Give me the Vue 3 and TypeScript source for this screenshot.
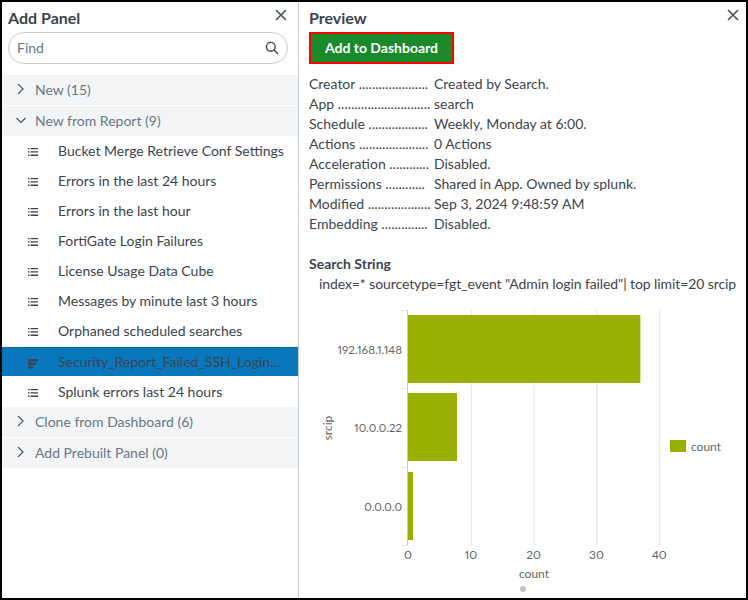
<script setup lang="ts">
interface Section {
  label: string
  open: boolean
}

const reports = [
  'Bucket Merge Retrieve Conf Settings',
  'Errors in the last 24 hours',
  'Errors in the last hour',
  'FortiGate Login Failures',
  'License Usage Data Cube',
  'Messages by minute last 3 hours',
  'Orphaned scheduled searches',
  'Security_Report_Failed_SSH_Login_Attempts',
  'Splunk errors last 24 hours'
]
const selectedReport = 'Security_Report_Failed_SSH_Login_Attempts'

const topSections: Section[] = [
  { label: 'New (15)', open: false },
  { label: 'New from Report (9)', open: true }
]
const bottomSections: Section[] = [
  { label: 'Clone from Dashboard (6)', open: false },
  { label: 'Add Prebuilt Panel (0)', open: false }
]

const details = [
  { key: 'Creator', dots: 21, value: 'Created by Search.' },
  { key: 'App', dots: 28, value: 'search' },
  { key: 'Schedule', dots: 18, value: 'Weekly, Monday at 6:00.' },
  { key: 'Actions', dots: 21, value: '0 Actions' },
  { key: 'Acceleration', dots: 12, value: 'Disabled.' },
  { key: 'Permissions', dots: 12, value: 'Shared in App. Owned by splunk.' },
  { key: 'Modified', dots: 19, value: 'Sep 3, 2024 9:48:59 AM' },
  { key: 'Embedding', dots: 14, value: 'Disabled.' }
]

// chart geometry, relative to the svg box
const originX = 109
const pxPerCount = 6.28
const xTicks = [0, 10, 20, 30, 40]
const bars = [
  { label: '192.168.1.148', count: 37, y: 7 },
  { label: '10.0.0.22', count: 7.8, y: 85 },
  { label: '0.0.0.0', count: 0.8, y: 164 }
]
const yTicks = [2, 80, 159, 237]
</script>

<template>
  <div class="frame">
    <aside class="side">
      <button class="close" aria-label="Close">
        <svg width="12" height="12" viewBox="0 0 12 12"><path d="M1 1l10 10M11 1L1 11" /></svg>
      </button>
      <h2 class="title">Add Panel</h2>
      <div class="search">
        <span class="find">Find</span>
        <svg class="lens" width="14" height="14" viewBox="0 0 14 14">
          <circle cx="5.8" cy="5.8" r="4.4" />
          <path d="M9 9l4 4" />
        </svg>
      </div>

      <div class="tree">
        <div v-for="s in topSections" :key="s.label" class="band">
          <svg class="chev" width="10" height="10" viewBox="0 0 10 10">
            <path :d="s.open ? 'M0.5 3l4.500 4.500 4.500-4.500' : 'M2 0l5 5-5 5'" />
          </svg>
          <span>{{ s.label }}</span>
        </div>
        <ul class="reports">
          <li v-for="r in reports" :key="r" class="report" :class="{ selected: r === selectedReport }">
            <svg v-if="r === selectedReport" class="ico" width="10" height="10" viewBox="0 0 10 10">
              <path class="solid" d="M0 0h10v2.500H0zM0 3.500h8v2.500H0zM0 7h5v2.500H0z" />
            </svg>
            <svg v-else class="ico" width="10" height="8" viewBox="0 0 10 8">
              <path class="solid" d="M0 0h1.500v1.300H0zM2.500 0H10v1.300H2.500zM0 3.300h1.500v1.300H0zM2.500 3.300H10v1.300H2.500zM0 6.600h1.500v1.300H0zM2.500 6.600H10v1.300H2.500z" />
            </svg>
            <span class="report-name">{{ r }}</span>
          </li>
        </ul>
        <div v-for="s in bottomSections" :key="s.label" class="band">
          <svg class="chev" width="10" height="10" viewBox="0 0 10 10">
            <path d="M2 0l5 5-5 5" />
          </svg>
          <span>{{ s.label }}</span>
        </div>
      </div>
    </aside>

    <main class="preview">
      <button class="close" aria-label="Close">
        <svg width="12" height="12" viewBox="0 0 12 12"><path d="M1 1l10 10M11 1L1 11" /></svg>
      </button>
      <h2 class="title">Preview</h2>
      <button class="add">Add to Dashboard</button>

      <dl class="details">
        <div v-for="d in details" :key="d.key" class="line">
          <dt>{{ d.key }} {{ '.'.repeat(d.dots) }}</dt>
          <dd>{{ d.value }}</dd>
        </div>
      </dl>

      <h3 class="string-title">Search String</h3>
      <p class="query">index=* sourcetype=fgt_event "Admin login failed"| top limit=20 srcip</p>

      <svg class="chart" width="447" height="290" viewBox="0 0 447 290">
        <line
          v-for="t in xTicks.slice(1)"
          :key="t"
          class="grid"
          :x1="originX + t * pxPerCount + 0.5"
          :x2="originX + t * pxPerCount + 0.5"
          y1="2"
          y2="237"
        />
        <line
          v-for="y in yTicks"
          :key="y"
          class="grid"
          x1="103"
          :x2="originX"
          :y1="y + 0.5"
          :y2="y + 0.5"
        />
        <rect
          v-for="b in bars"
          :key="b.label"
          class="bar"
          :x="originX"
          :y="b.y"
          :width="b.count * pxPerCount"
          height="68"
        />
        <line class="axis" x1="108.500" x2="108.500" y1="2" y2="237" />
        <text v-for="b in bars" :key="b.label" class="tick ip" x="103" :y="b.y + 39" text-anchor="end">{{ b.label }}</text>
        <text
          v-for="t in xTicks"
          :key="t"
          class="tick"
          :x="originX + t * pxPerCount"
          y="251"
          text-anchor="middle"
        >{{ t }}</text>
        <text class="tick" x="235" y="270" text-anchor="middle">count</text>
        <text class="tick" transform="translate(33 120) rotate(-90)" text-anchor="middle">srcip</text>
        <rect class="bar" x="371" y="132" width="16" height="12" />
        <text class="tick" x="392" y="143">count</text>
        <circle class="pager" cx="224" cy="281" r="3" />
      </svg>
    </main>
  </div>
</template>

<style>
html,
body {
  margin: 0;
  background: #fff;
}
</style>

<style scoped>
.frame {
  box-sizing: border-box;
  width: 748px;
  height: 600px;
  border: 2px solid #000;
  display: flex;
  overflow: hidden;
  font-family: Lato, "Open Sans", sans-serif;
  font-size: 14px;
  color: #3c444d;
}

.side {
  position: relative;
  width: 296px;
  flex: none;
  border-right: 1px solid #c3cbd4;
  box-sizing: content-box;
}

.preview {
  position: relative;
  flex: 1;
  min-width: 0;
  padding-left: 10px;
}

.close {
  position: absolute;
  top: 7px;
  right: 11px;
  padding: 0;
  border: 0;
  background: none;
  line-height: 0;
}

.preview .close {
  right: 7px;
}

.close path {
  fill: none;
  stroke: #4b5560;
  stroke-width: 1.7;
}

.title {
  margin: 0;
  font-size: 16px;
  font-weight: 700;
  line-height: 32px;
  height: 30px;
  color: #3c444d;
}

.side .title {
  padding-left: 6px;
}

.search {
  box-sizing: border-box;
  height: 32px;
  margin: 0 10px 0 6px;
  border: 1px solid #c3cbd4;
  border-radius: 16px;
  padding: 0 8px 1px;
  display: flex;
  align-items: center;
  justify-content: space-between;
}

.find {
  color: #6b7785;
}

.lens circle,
.lens path {
  fill: none;
  stroke: #3c444d;
  stroke-width: 1.4;
}

.tree {
  margin-top: 11px;
}

.band {
  box-sizing: border-box;
  height: 30px;
  margin-bottom: 1px;
  padding: 0 0 2px 14px;
  background: #f2f4f5;
  display: flex;
  align-items: center;
  gap: 9px;
  color: #6b7785;
}

.chev {
  flex: none;
}

.chev path {
  fill: none;
  stroke: #4b5560;
  stroke-width: 1.2;
}

.reports {
  list-style: none;
  margin: -1px 0 0;
  padding: 0;
}

.report {
  box-sizing: border-box;
  height: 30px;
  display: flex;
  align-items: center;
  padding: 0 0 2px 26px;
}

.ico {
  flex: none;
  margin-right: 20px;
  position: relative;
  top: 2px;
}

.solid {
  fill: #3c444d;
}

.report.selected {
  height: 29px;
  margin-top: 1px;
  padding-bottom: 0;
  background: #0877bc;
  box-shadow: inset 0 1px 0 #0a6aa5;
}

.report.selected + .report {
  height: 31px;
  padding-bottom: 1px;
}

.report-name {
  white-space: nowrap;
  overflow: hidden;
  text-overflow: ellipsis;
  width: 228px;
}

.add {
  box-sizing: border-box;
  display: block;
  width: 145px;
  height: 32px;
  padding: 0 0 2px;
  border: 2px solid #f00;
  background: #1a8929;
  color: #fff;
  font: 700 14px Lato, "Open Sans", sans-serif;
}

.details {
  margin: 9px 0 0;
}

.line {
  display: flex;
  height: 20px;
  align-items: center;
  white-space: nowrap;
}

.line dt {
  width: 125px;
  flex: none;
}

.line dd {
  margin: 0;
}

.string-title {
  margin: 21px 0 0;
  font-size: 14px;
  font-weight: 700;
  line-height: 20px;
}

.query {
  margin: 0 0 0 10px;
  line-height: 20px;
  white-space: nowrap;
  letter-spacing: -0.09px;
}

.chart {
  display: block;
  margin: 14px 0 0 -10px;
}

.grid {
  stroke: #e1e3e5;
  stroke-width: 1;
}

.axis {
  stroke: #c8cacc;
  stroke-width: 1;
}

.bar {
  fill: #9ab000;
}

.tick {
  fill: #666;
  font-size: 12px;
  font-variant-numeric: proportional-nums;
}

.tick.ip {
  font-size: 11.5px;
}

.pager {
  fill: #c3c3c3;
}
</style>
